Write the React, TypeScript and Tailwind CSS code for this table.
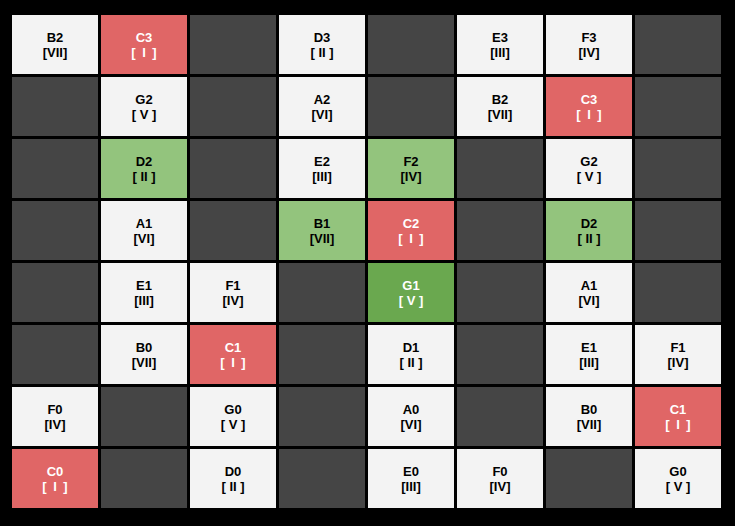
type Kind = "L" | "R" | "G" | "GG" | "D";
type Cell = { kind: Kind; note?: string; deg?: string };

const D: Cell = { kind: "D" };
const c = (kind: Kind, note: string, deg: string): Cell => ({ kind, note, deg });

// en spaces around the single I so it takes the width of the wider numerals
const I1 = "\u2002I\u2002";

const rows: Cell[][] = [
  [c("L", "B2", "VII"), c("R", "C3", I1), D, c("L", "D3", " II "), D, c("L", "E3", "III"), c("L", "F3", "IV"), D],
  [D, c("L", "G2", " V "), D, c("L", "A2", "VI"), D, c("L", "B2", "VII"), c("R", "C3", I1), D],
  [D, c("G", "D2", " II "), D, c("L", "E2", "III"), c("G", "F2", "IV"), D, c("L", "G2", " V "), D],
  [D, c("L", "A1", "VI"), D, c("G", "B1", "VII"), c("R", "C2", I1), D, c("G", "D2", " II "), D],
  [D, c("L", "E1", "III"), c("L", "F1", "IV"), D, c("GG", "G1", " V "), D, c("L", "A1", "VI"), D],
  [D, c("L", "B0", "VII"), c("R", "C1", I1), D, c("L", "D1", " II "), D, c("L", "E1", "III"), c("L", "F1", "IV")],
  [c("L", "F0", "IV"), D, c("L", "G0", " V "), D, c("L", "A0", "VI"), D, c("L", "B0", "VII"), c("R", "C1", I1)],
  [c("R", "C0", I1), D, c("L", "D0", " II "), D, c("L", "E0", "III"), c("L", "F0", "IV"), D, c("L", "G0", " V ")],
];

const bg: Record<Kind, string> = {
  L: "bg-[#f3f3f3] text-black",
  R: "bg-[#e06666] text-white",
  G: "bg-[#93c47d] text-black",
  GG: "bg-[#6aa84f] text-white",
  D: "bg-[#454545]",
};

export default function App() {
  return (
    <div className="min-h-screen w-[735px] h-[526px] bg-black pl-[12px] pt-[15px]">
      <div className="grid grid-cols-[repeat(8,86px)] grid-rows-[repeat(8,59px)] gap-[3px]">
        {rows.flat().map((cell, i) => (
          <div
            key={i}
            className={`${bg[cell.kind]} flex flex-col items-center justify-center font-['Liberation_Sans',Arial,sans-serif] font-bold text-[13px] leading-[15px]`}
          >
            {cell.note && (
              <>
                <span>{cell.note}</span>
                <span className="whitespace-pre">[{cell.deg}]</span>
              </>
            )}
          </div>
        ))}
      </div>
    </div>
  );
}
